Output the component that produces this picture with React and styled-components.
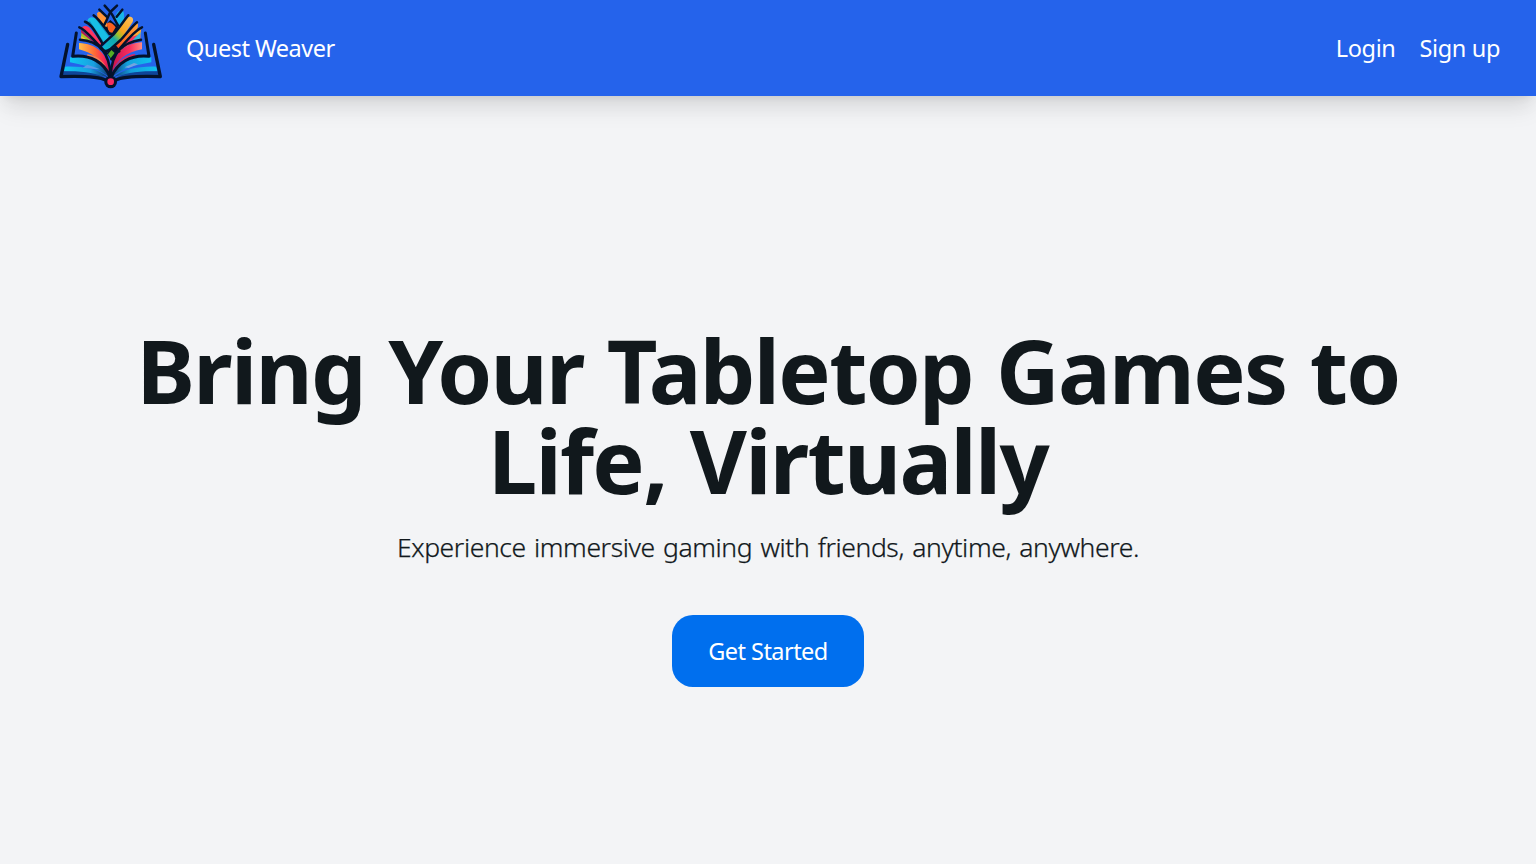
import React from "react";
import styled, { createGlobalStyle } from "styled-components";

const GlobalStyle = createGlobalStyle`
  *, *::before, *::after { box-sizing: border-box; }
  body {
    margin: 0;
    background: #f3f4f6;
    color: #11181c;
    font-family: "Noto Sans", "Open Sans", sans-serif;
  }
`;

const Page = styled.div`
  min-height: 100vh;
  display: flex;
  flex-direction: column;
`;

const Navbar = styled.header`
  height: 96px;
  padding: 0 36px 0 50px;
  display: flex;
  align-items: center;
  justify-content: space-between;
  background: #2563eb;
  box-shadow: 0 15px 22.5px -4.5px rgba(0, 0, 0, 0.1), 0 6px 9px -6px rgba(0, 0, 0, 0.1),
    0 6px 24px rgba(0, 0, 0, 0.03);
`;

const Brand = styled.a`
  display: flex;
  align-items: center;
  gap: 16px;
`;

const Logo = styled.svg`
  display: block;
  width: 120px;
  height: 96px;
`;

const NavText = styled.span`
  color: #fff;
  font-size: 23.5px;
  line-height: 36px;
  white-space: nowrap;
  letter-spacing: ${(p) => p.$tracking || "0"};
`;

const NavLinks = styled.nav`
  display: flex;
  gap: 24px;
`;

const Hero = styled.main`
  flex: 1;
  display: flex;
  flex-direction: column;
  align-items: center;
  padding-top: 229px;
  text-align: center;
`;

const Title = styled.h1`
  width: 1320px;
  margin: 0;
  font-size: 88px;
  font-weight: 700;
  line-height: 90px;
  letter-spacing: -1.7px;
  word-spacing: 2px;
`;

const Subtitle = styled.p`
  margin: 21px 0 0;
  font-size: 26.5px;
  font-weight: 300;
  line-height: 42px;
  letter-spacing: -0.4px;
  word-spacing: 1.8px;
  white-space: nowrap;
  -webkit-text-stroke: 0.25px currentColor;
`;

const Button = styled.button`
  width: 192px;
  height: 72px;
  margin-top: 47px;
  padding: 0;
  border: 0;
  border-radius: 21px;
  background: #006fee;
  color: #fff;
  font: inherit;
  font-size: 23.5px;
  letter-spacing: -0.55px;
`;

const INK = "#04122b";

function BookLogo() {
  return (
    <Logo viewBox="0 0 360 288" fill="none" aria-label="Quest Weaver">
      <defs>
        <linearGradient id="sun" x1="0" y1="0" x2="1" y2="0">
          <stop offset="0" stopColor="#ffc04a" />
          <stop offset="0.5" stopColor="#ff6a35" />
          <stop offset="0.8" stopColor="#f8275a" />
          <stop offset="1" stopColor="#b5124f" />
        </linearGradient>
        <linearGradient id="rose" x1="0" y1="0" x2="1" y2="0">
          <stop offset="0" stopColor="#c31250" />
          <stop offset="0.6" stopColor="#f82e5d" />
          <stop offset="1" stopColor="#ff8b83" />
        </linearGradient>
        <linearGradient id="seaLeft" x1="0" y1="0" x2="1" y2="0">
          <stop offset="0" stopColor="#10c8f2" />
          <stop offset="0.6" stopColor="#199fe0" />
          <stop offset="1" stopColor="#0c2f6c" />
        </linearGradient>
        <linearGradient id="seaRight" x1="1" y1="0" x2="0" y2="0">
          <stop offset="0" stopColor="#10c0ef" />
          <stop offset="0.6" stopColor="#159fdc" />
          <stop offset="1" stopColor="#0c3879" />
        </linearGradient>
        <linearGradient id="ribbon" x1="0" y1="1" x2="1" y2="0">
          <stop offset="0" stopColor="#05bce3" />
          <stop offset="0.38" stopColor="#12a7ad" />
          <stop offset="0.5" stopColor="#9cc02b" />
          <stop offset="0.62" stopColor="#f5a51f" />
          <stop offset="1" stopColor="#ffc05c" />
        </linearGradient>
        <linearGradient id="ember" x1="0" y1="1" x2="1" y2="0">
          <stop offset="0" stopColor="#ff3d24" />
          <stop offset="0.45" stopColor="#ff7424" />
          <stop offset="1" stopColor="#ffa93c" />
        </linearGradient>
      </defs>

      {/* lower pages */}
      <path d="M60 172H118C146 178 168 205 179 232C150 212 120 198 60 187Z" fill="url(#seaLeft)" />
      <path d="M44 200C100 198 145 207 174 232C135 222 90 216 42 214Z" fill="url(#seaLeft)" />
      <path d="M41 214C92 212 142 218 170 236C128 229 82 227 38 226Z" fill="#0f4599" />
      <path d="M304 172H246C218 178 196 205 185 232C215 207 248 196 304 187Z" fill="url(#seaRight)" />
      <path d="M319 200C268 198 217 208 190 232C231 220 274 216 322 214Z" fill="url(#seaRight)" />
      <path d="M323 214C268 212 220 218 194 236C235 229 281 227 326 226Z" fill="#0f4599" />
      <path d="M98 203L112 194L130 200L150 208L126 206Z" fill="#5b9be6" />
      <path d="M224 202L252 189L264 193L236 204Z" fill="#76a4df" />

      {/* curved upper pages */}
      <path d="M87 129C138 131 176 160 181 226C158 183 126 157 87 148Z" fill="url(#sun)" />
      <path d="M112 163C142 166 166 186 178 222C156 192 142 178 110 170Z" fill="#f58155" />
      <path d="M276 127C226 130 188 157 183 225C200 178 230 157 276 148Z" fill="url(#rose)" />
      <path d="M256 162C223 164 197 188 186 224C203 192 224 176 254 170Z" fill="#d72864" />
      <path d="M95 92L132 132L92 120Z" fill="#a4c529" />
      <path d="M94 108L130 131L92 120Z" fill="#ecc239" />

      {/* strands, back to front */}
      <path d="M181 60L205 80L190 106L178 106L160 80Z" fill={INK} />
      <path d="M141 40C146 32 152 34 157 42L170 48L172 78L164 86L143 60Z" fill="#ff9438" />
      <path d="M170 72C180 62 189 72 197 82L187 98L176 96Z" fill="#fa601f" />
      <path d="M198 44C204 28 222 28 222 42L222 62L206 80L192 58Z" fill="#18b4e8" />
      <path d="M136 54C150 60 160 82 178 104L172 122L127 57Z" fill="#0b93c4" />
      <path d="M112 62C118 48 132 50 139 60L177 112L160 132Z" fill="#18bfe6" />
      <path d="M112 66L120 64L160 124L157 132Z" fill="#0b87bd" />
      <path d="M93 84C105 74 114 78 121 86L157 132L150 142Z" fill="#ff345e" />
      <path d="M93 88L150 140L142 136L94 98Z" fill="#b31851" />
      <path d="M188 148L256 72C262 64 267 74 262 86L210 156Z" fill="url(#ember)" />
      <path d="M203 154L262 91L274 82L271 112L237 134Z" fill="#ffaa32" />
      <path d="M206 154L240 112L273 102L272 120L235 135Z" fill="#f73561" />
      <path d="M256 112L272 97L271 119L246 124Z" fill="#2ebbd8" />
      <path d="M152 146L190 106L228 54C238 46 254 50 248 66L212 120L180 148C168 158 158 152 152 146Z" fill="url(#ribbon)" />
      <path d="M180 148L196 140L207 154L184 180L170 160Z" fill={INK} />
      <path d="M184 150L195 160L184 177L174 163Z" fill="#55ac25" />
      <path d="M196 140L204 135L215 147L207 153Z" fill="#ff4a24" />

      {/* dark outlines of the strands */}
      <g stroke={INK} strokeWidth="7.5" strokeLinecap="round" strokeLinejoin="round">
        <path d="M164 17L181 36C192 50 196 65 204 76" />
        <path d="M201 17L181 36C174 49 170 63 163 74" />
        <path d="M148 29L170 50" />
        <path d="M217 29L200 50" />
        <path d="M131 46C145 54 166 86 178 101" />
        <path d="M235 46C218 67 205 87 190 104L151 139" />
        <path d="M105 65C124 70 137 98 157 130" />
        <path d="M88 82C107 88 130 120 151 140L169 161" />
        <path d="M261 67C246 79 229 102 212 120L180 148C168 158 158 152 152 145" />
        <path d="M276 82C253 92 229 123 205 151L184 178" />
        <path d="M196 140L208 154" />
        <path d="M90 119C139 122 178 150 182 227" />
        <path d="M273 119C219 128 185 154 182 227" />
      </g>

      {/* covers and spine */}
      <g stroke={INK} strokeWidth="9" strokeLinecap="round" strokeLinejoin="round">
        <path d="M79 99L68 169C121 163 163 187 180 231" />
        <path d="M286 99L297 169C240 163 201 190 184 231" />
        <path d="M53 133L33 230C89 228 142 228 169 241" strokeWidth="10" />
        <path d="M311 133L331 230C275 228 222 228 195 241" strokeWidth="10" />
      </g>
      <circle cx="182" cy="246" r="19" fill={INK} />
      <circle cx="182" cy="245" r="10" fill="#f52b61" />
    </Logo>
  );
}

export default function App() {
  return (
    <>
      <GlobalStyle />
      <Page>
        <Navbar>
          <Brand>
            <BookLogo />
            <NavText $tracking="-0.5px">Quest Weaver</NavText>
          </Brand>
          <NavLinks>
            <NavText $tracking="-0.4px">Login</NavText>
            <NavText $tracking="-0.35px">Sign up</NavText>
          </NavLinks>
        </Navbar>
        <Hero>
          <Title>Bring Your Tabletop Games to Life, Virtually</Title>
          <Subtitle>Experience immersive gaming with friends, anytime, anywhere.</Subtitle>
          <Button>Get Started</Button>
        </Hero>
      </Page>
    </>
  );
}
